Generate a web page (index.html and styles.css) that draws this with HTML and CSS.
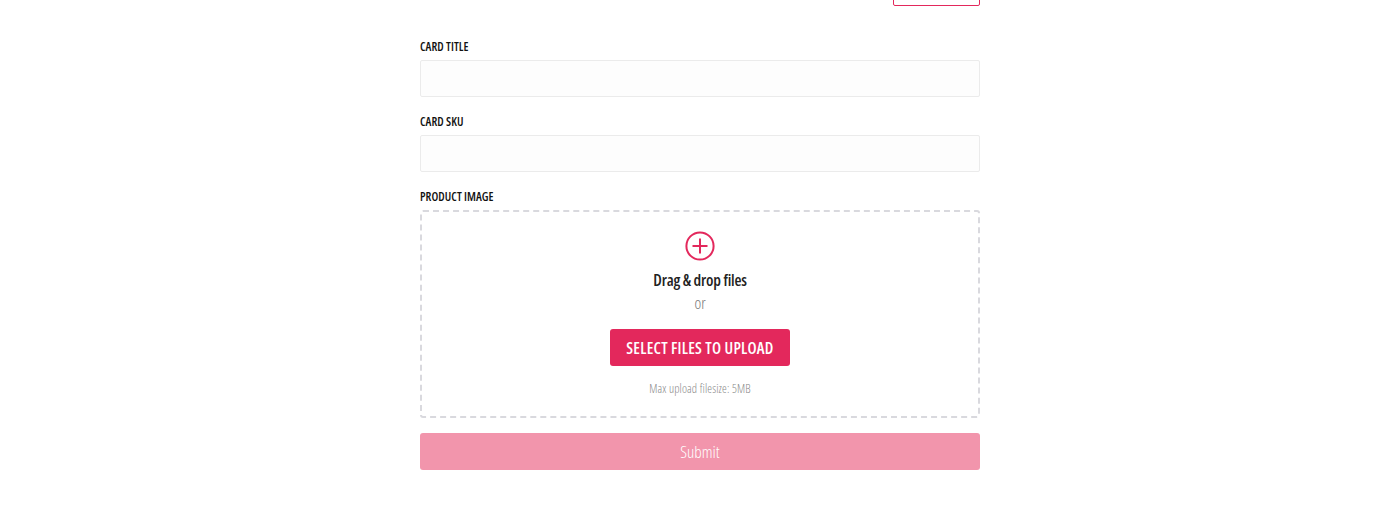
FILE: index.html
```html
<!DOCTYPE html>
<html lang="en">
<head>
    <meta charset="UTF-8">
    <title>New Card</title>
    <link rel="stylesheet" href="styles.css">
</head>
<body>
    <main class="container">
        <div class="top-actions">
            <a class="btn-outline" href="#"></a>
        </div>
        <form class="card-form">
            <div class="form-group">
                <label for="title">CARD TITLE</label>
                <input type="text" id="title">
            </div>
            <div class="form-group">
                <label for="sku">CARD SKU</label>
                <input type="text" id="sku">
            </div>
            <div class="form-group upload-group">
                <label>PRODUCT IMAGE</label>
                <div class="dropzone">
                    <svg class="plus-icon" width="30" height="30" viewBox="0 0 30 30" fill="none" stroke="#e3285c" stroke-width="2">
                        <circle cx="15" cy="15" r="13.6"/>
                        <path d="M15 7.5v15M7.5 15h15"/>
                    </svg>
                    <p class="drop-title">Drag &amp; drop files</p>
                    <p class="drop-or">or</p>
                    <button type="button" class="btn-select">SELECT FILES TO UPLOAD</button>
                    <p class="drop-note">Max upload filesize: 5MB</p>
                </div>
            </div>
            <button type="button" class="btn-submit">Submit</button>
        </form>
    </main>
</body>
</html>
```

FILE: styles.css
```css
body {
    margin: 0;
    font-family: 'Open Sans', 'Liberation Sans', sans-serif;
    font-stretch: 75%;
    background-color: #fff;
    color: #111;
}
.container {
    width: 560px;
    margin: 0 auto;
}
.top-actions {
    display: flex;
    justify-content: flex-end;
    height: 6px;
    overflow: hidden;
}
.btn-outline {
    display: block;
    width: 87px;
    height: 36px;
    margin-top: -30px;
    box-sizing: border-box;
    border: 1px solid #e3285c;
    border-radius: 2px;
    flex-shrink: 0;
}
.card-form {
    padding-top: 33px;
}
.form-group {
    margin-bottom: 17px;
}
.form-group label {
    display: block;
    height: 21px;
    line-height: 15px;
    font-size: 12px;
    font-weight: 600;
    letter-spacing: 0.05px;
    color: #111;
}
.form-group input {
    display: block;
    width: 100%;
    height: 37px;
    box-sizing: border-box;
    background-color: #fdfdfd;
    border: 1px solid #ebebeb;
    border-radius: 2px;
}
.upload-group {
    margin-bottom: 15px;
}
.dropzone {
    height: 208px;
    box-sizing: border-box;
    border: 2px dashed #d9d9de;
    border-radius: 3px;
    padding-top: 19px;
    display: flex;
    flex-direction: column;
    align-items: center;
}
.plus-icon {
    display: block;
}
.drop-title {
    margin: 9px 0 0;
    font-size: 16px;
    line-height: 20px;
    font-weight: 600;
    letter-spacing: -0.2px;
    color: #222;
}
.drop-or {
    margin: 3px 0 0;
    font-size: 16px;
    line-height: 20px;
    font-weight: 300;
    color: #777;
}
.btn-select {
    width: 180px;
    height: 37px;
    margin-top: 16px;
    padding: 0;
    background-color: #e3285c;
    color: #fff;
    border: none;
    border-radius: 3px;
    font-family: inherit;
    font-stretch: inherit;
    font-size: 16px;
    font-weight: 600;
    letter-spacing: 0.25px;
}
.drop-note {
    margin: 15px 0 0;
    font-size: 12px;
    line-height: 16px;
    font-weight: 300;
    letter-spacing: 0.15px;
    color: #888;
}
.btn-submit {
    display: block;
    width: 100%;
    height: 37px;
    padding: 0;
    background-color: #f295ac;
    color: #fff;
    border: none;
    border-radius: 3px;
    font-family: inherit;
    font-stretch: inherit;
    font-size: 17px;
    font-weight: 300;
}
```
